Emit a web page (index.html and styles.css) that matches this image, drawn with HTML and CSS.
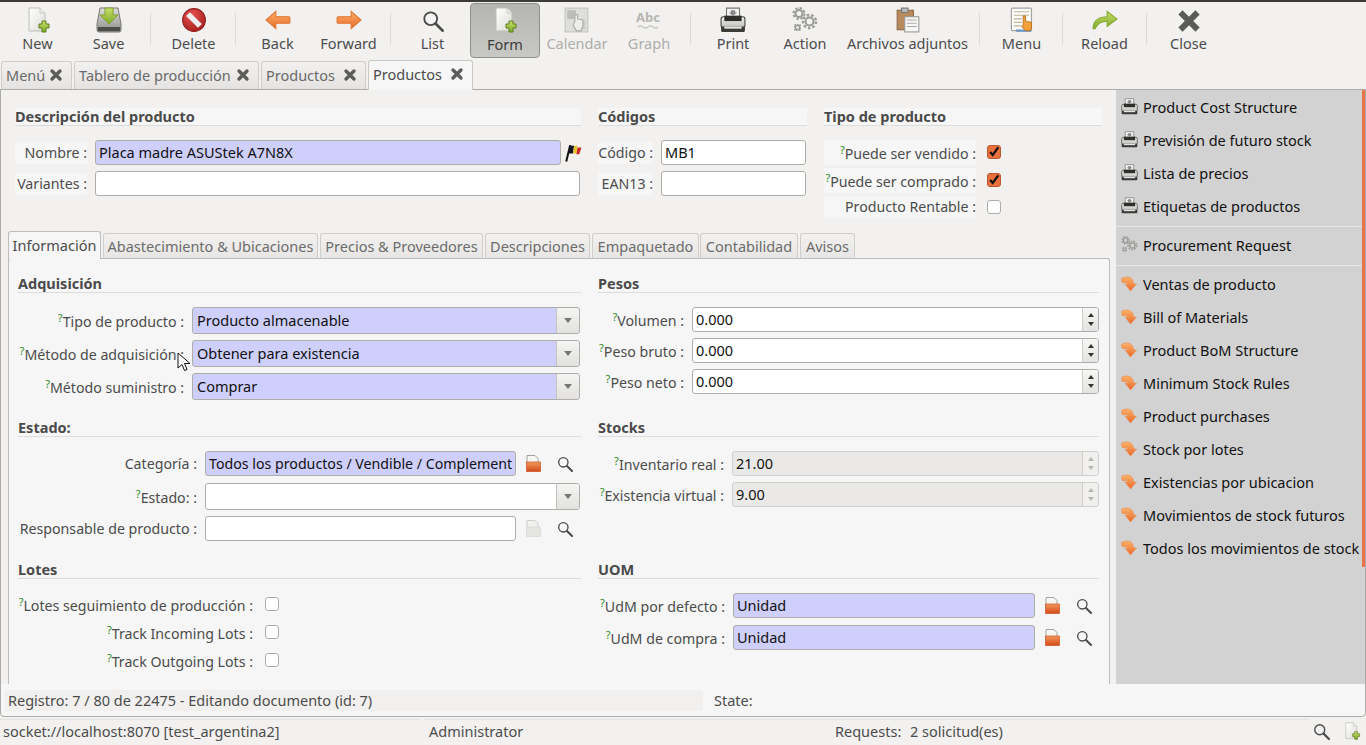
FILE: index.html
```html
<!DOCTYPE html>
<html lang="es">
<head>
<meta charset="utf-8">
<title>Productos</title>
<link rel="stylesheet" href="styles.css">
</head>
<body>
<svg class="defs" xmlns="http://www.w3.org/2000/svg">
<defs>
<linearGradient id="gPage" x1="0" y1="0" x2="1" y2="1"><stop offset="0" stop-color="#fff"/><stop offset="1" stop-color="#dcdcd8"/></linearGradient>
<linearGradient id="gOrange" x1="0" y1="0" x2="0" y2="1"><stop offset="0" stop-color="#fbb26a"/><stop offset="1" stop-color="#e8692a"/></linearGradient>
<linearGradient id="gGreen" x1="0" y1="0" x2="0" y2="1"><stop offset="0" stop-color="#c6e06a"/><stop offset="1" stop-color="#7fa82a"/></linearGradient>
<linearGradient id="gDisk" x1="0" y1="0" x2="0" y2="1"><stop offset="0" stop-color="#dcdcd8"/><stop offset="1" stop-color="#8f8f8b"/></linearGradient>
<linearGradient id="gBody" x1="0" y1="0" x2="0" y2="1"><stop offset="0" stop-color="#f4f4f2"/><stop offset="1" stop-color="#bdbdb9"/></linearGradient>
<radialGradient id="gRed" cx=".4" cy=".3" r=".8"><stop offset="0" stop-color="#e8524f"/><stop offset="1" stop-color="#a01c1c"/></radialGradient>
<linearGradient id="gFolder" x1="0" y1="0" x2="0" y2="1"><stop offset="0" stop-color="#f39a5c"/><stop offset="1" stop-color="#d4491a"/></linearGradient>
<symbol id="i-new" viewBox="0 0 24 26"><path d="M3 1h11l5 5v18H3z" fill="url(#gPage)" stroke="#bdbdb9"/><path d="M14 1v5h5" fill="#eee" stroke="#c8c8c4"/><path d="M16 14h4v3h3v4h-3v4h-4v-4h-3v-4h3z" fill="url(#gGreen)" stroke="#5f7d1e"/></symbol>
<symbol id="i-save" viewBox="0 0 26 26"><path d="M4 1h18l3 16v6a2 2 0 0 1-2 2H3a2 2 0 0 1-2-2v-6z" fill="url(#gDisk)" stroke="#777"/><rect x="2" y="20" width="22" height="4" fill="#4c4c4a"/><path d="M9 1h8v7h5l-9 9-9-9h5z" fill="url(#gGreen)" stroke="#83a32e"/></symbol>
<symbol id="i-del" viewBox="0 0 24 24"><circle cx="12" cy="12" r="10.5" fill="url(#gRed)" stroke="#8e1b1b"/><path d="M6.5 6.5l11 11" stroke="#f0eeee" stroke-width="5"/></symbol>
<symbol id="i-back" viewBox="0 0 24 18"><path d="M1 9l9-8v5h12a1 1 0 0 1 1 1v4a1 1 0 0 1-1 1H10v5z" fill="url(#gOrange)" stroke="#e0742f"/></symbol>
<symbol id="i-fwd" viewBox="0 0 24 18"><path d="M23 9l-9-8v5H2a1 1 0 0 0-1 1v4a1 1 0 0 0 1 1h12v5z" fill="url(#gOrange)" stroke="#e0742f"/></symbol>
<symbol id="i-search" viewBox="0 0 24 24"><circle cx="9.5" cy="9.5" r="7" fill="#f8f8f8" fill-opacity=".6" stroke="#4a4a48" stroke-width="2"/><path d="M15 15l7.5 7.5" stroke="#4a4a48" stroke-width="3" stroke-linecap="round"/></symbol>
<symbol id="i-cal" viewBox="0 0 24 24"><rect x="1" y="1" width="21" height="22" fill="#dededb" stroke="#c4c4c0"/><rect x="3" y="3" width="8" height="8" fill="#bcbcb8"/><rect x="12" y="12" width="8" height="9" fill="#cfcfcc"/><path d="M10 13V7h2.5v4l5 1v6l-2 4h-4l-3-5z" fill="#ececea" stroke="#aaa"/></symbol>
<symbol id="i-print" viewBox="0 0 24 24"><path d="M6 1h12v9H6z" fill="#f4f4f2" stroke="#777"/><path d="M10 3h4v2h2l-4 3-4-3h2z" fill="#888"/><rect x="1" y="9" width="22" height="10" rx="2" fill="url(#gBody)" stroke="#444"/><rect x="4" y="8" width="16" height="5" fill="#2e2e2c"/><rect x="1" y="18" width="22" height="5" rx="1" fill="#3a3a38"/><rect x="4" y="18" width="16" height="2" fill="#e4e4e2"/></symbol>
<symbol id="i-gear" viewBox="0 0 26 26"><g fill="none" stroke="#9a9a96"><circle cx="7" cy="6.5" r="3.5" stroke-width="2"/><circle cx="7" cy="6.5" r="5.5" stroke-width="2" stroke-dasharray="2.5 1.8"/><circle cx="17.5" cy="14.5" r="4" stroke-width="2"/><circle cx="17.5" cy="14.5" r="6.5" stroke-width="2.5" stroke-dasharray="2.5 2"/><rect x="3.5" y="18.5" width="4" height="4" stroke-width="1.5"/><rect x="2.5" y="17.5" width="6" height="6" stroke-width="1" stroke-dasharray="1.5 1.5"/></g></symbol>
<symbol id="i-clip" viewBox="0 0 22 24"><rect x="1" y="3" width="15" height="18" fill="#b98a5e" stroke="#8e6a47"/><rect x="5" y="1" width="6" height="4" fill="#bbb" stroke="#777"/><rect x="8" y="9" width="13" height="14" fill="#f6f6f4" stroke="#999"/><path d="M10 12h9M10 15h9M10 18h9" stroke="#aaa"/></symbol>
<symbol id="i-menu" viewBox="0 0 20 22"><rect x="1" y="1" width="17" height="19" rx="1" fill="#fbfbf9" stroke="#a2a29e"/><path d="M3 4h13M3 7h13M3 10h7M3 13h7M3 16h7" stroke="#c0b89a"/><rect x="5" y="19" width="13" height="2" fill="#6d97c6"/><path d="M11 15V7.5h2V12l5 1v5l-1 2h-4l-3-3z" fill="#f2a13a" stroke="#b96a10" stroke-width=".7"/></symbol>
<symbol id="i-reload" viewBox="0 0 24 18"><path d="M1 17C1 9 7 6 14 6V1l9 7-9 7v-5c-6 0-9 2-11 7z" fill="url(#gGreen)" stroke="#85a82f"/></symbol>
<symbol id="i-x" viewBox="0 0 24 24"><path d="M5 5l14 14M19 5L5 19" stroke="#5a5a58" stroke-width="6.5" stroke-linecap="square"/></symbol>
<symbol id="i-tabx" viewBox="0 0 14 14"><path d="M3 3l8 8M11 3l-8 8" stroke="#5c5c5a" stroke-width="3.4" stroke-linecap="round"/></symbol>
<symbol id="i-flow" viewBox="0 0 17 17"><path d="M1 3C7 .5 12.5 2.500 12.500 9H15.500L9.500 16 4 9H7C7 7.500 4.500 7 2 8 .5 7 .3 4.500 1 3z" fill="url(#gOrange)" stroke="#ee8a4c" stroke-width=".6" stroke-linejoin="round"/></symbol>
<symbol id="i-folder" viewBox="0 0 17 17"><path d="M2 .5h8l3 3v6H2z" fill="#f6f6f4" stroke="#a2a29e"/><rect x="1.5" y="7" width="14" height="9.5" fill="url(#gFolder)" stroke="#c9521f" stroke-width=".7"/></symbol>
<symbol id="i-folder-off" viewBox="0 0 17 17"><path d="M2 .5h8l3 3v6H2z" fill="#f0f0ee" stroke="#cdcdc9"/><rect x="1.5" y="7" width="14" height="9.5" fill="#e4e4e1" stroke="#d6d6d2" stroke-width=".7"/></symbol>
<symbol id="i-flag" viewBox="0 0 16 16"><path d="M2 15.500L5.500 1" stroke="#111" stroke-width="1.8"/><path d="M5 1.500h4l-1 7H3.500z" fill="#15151f"/><path d="M9 1.500h3l-1 7H8z" fill="#e6c52a"/><path d="M12 3h3.500l-2 6H11z" fill="#c8281e"/></symbol>
<symbol id="i-check" viewBox="0 0 14 14"><path d="M2.500 7l3 3.500L12 1.500" fill="none" stroke="#111" stroke-width="2.600"/></symbol>
</defs>
</svg>

<div class="app">
  <div class="topline"></div>

  <nav class="toolbar">
    <button class="tool"><svg class="ti"><use href="#i-new"/></svg><span>New</span></button>
    <button class="tool"><svg class="ti"><use href="#i-save"/></svg><span>Save</span></button>
    <i class="sep wide-sep"></i>
    <button class="tool"><svg class="ti"><use href="#i-del"/></svg><span>Delete</span></button>
    <i class="sep"></i>
    <button class="tool"><svg class="ti"><use href="#i-back"/></svg><span>Back</span></button>
    <button class="tool"><svg class="ti"><use href="#i-fwd"/></svg><span>Forward</span></button>
    <i class="sep"></i>
    <button class="tool"><svg class="ti sm"><use href="#i-search"/></svg><span>List</span></button>
    <button class="tool active"><svg class="ti"><use href="#i-new"/></svg><span>Form</span></button>
    <button class="tool off"><svg class="ti"><use href="#i-cal"/></svg><span>Calendar</span></button>
    <button class="tool off"><svg class="ti"><text x="12" y="15" class="abc">Abc</text><path d="M2 20q2.500-2 5 0t5 0 5 0 5 0" class="abcw"/></svg><span>Graph</span></button>
    <i class="sep tight"></i>
    <button class="tool w72"><svg class="ti"><use href="#i-print"/></svg><span>Print</span></button>
    <button class="tool w72"><svg class="ti"><use href="#i-gear"/></svg><span>Action</span></button>
    <button class="tool wide"><svg class="ti"><use href="#i-clip"/></svg><span>Archivos adjuntos</span></button>
    <i class="sep tight"></i>
    <button class="tool"><svg class="ti"><use href="#i-menu"/></svg><span>Menu</span></button>
    <i class="sep tight"></i>
    <button class="tool"><svg class="ti"><use href="#i-reload"/></svg><span>Reload</span></button>
    <i class="sep"></i>
    <button class="tool"><svg class="ti sm"><use href="#i-x"/></svg><span>Close</span></button>
  </nav>

  <div class="doctabs">
    <div class="dtab t-menu">Menú <svg class="tabx"><use href="#i-tabx"/></svg></div>
    <div class="dtab t-tab">Tablero de producción <svg class="tabx"><use href="#i-tabx"/></svg></div>
    <div class="dtab t-prod">Productos <svg class="tabx"><use href="#i-tabx"/></svg></div>
    <div class="dtab t-prod current">Productos <svg class="tabx"><use href="#i-tabx"/></svg></div>
  </div>

  <div class="panel">
    <div class="body">
      <main class="main">
        <div class="head-grid">
          <section class="desc">
            <h3 class="sec">Descripción del producto</h3>
            <div class="row r-desc">
              <label class="lab tint">Nombre :</label>
              <div class="withflag"><div class="field req">Placa madre ASUStek A7N8X</div><svg class="flag"><use href="#i-flag"/></svg></div>
            </div>
            <div class="row r-desc r-gap">
              <label class="lab tint">Variantes :</label>
              <div class="field"></div>
            </div>
          </section>
          <section class="codes">
            <h3 class="sec">Códigos</h3>
            <div class="row r-code">
              <label class="lab tint">Código :</label>
              <div class="field">MB1</div>
            </div>
            <div class="row r-code r-gap">
              <label class="lab tint">EAN13 :</label>
              <div class="field"></div>
            </div>
          </section>
          <section class="kinds">
            <h3 class="sec">Tipo de producto</h3>
            <div class="checks">
              <div class="row r-kind"><label class="lab tint"><sup class="q">?</sup>Puede ser vendido :</label><span class="box on"><svg><use href="#i-check"/></svg></span></div>
              <div class="row r-kind"><label class="lab tint"><sup class="q">?</sup>Puede ser comprado :</label><span class="box on"><svg><use href="#i-check"/></svg></span></div>
              <div class="row r-kind"><label class="lab tint">Producto Rentable :</label><span class="box"></span></div>
            </div>
          </section>
        </div>

        <div class="nbtabs">
          <div class="nbtab current">Información</div>
          <div class="nbtab n1">Abastecimiento &amp; Ubicaciones</div>
          <div class="nbtab n2">Precios &amp; Proveedores</div>
          <div class="nbtab n3">Descripciones</div>
          <div class="nbtab n4">Empaquetado</div>
          <div class="nbtab n5">Contabilidad</div>
          <div class="nbtab n6">Avisos</div>
        </div>

        <div class="page">
          <section>
            <h3 class="sec">Adquisición</h3>
            <div class="row r-adq"><label class="lab"><sup class="q">?</sup>Tipo de producto :</label><div class="select req"><span class="val">Producto almacenable</span><span class="drop"></span></div></div>
            <div class="row r-adq r-pitch"><label class="lab"><sup class="q">?</sup>Método de adquisición :</label><div class="select req"><span class="val">Obtener para existencia</span><span class="drop"></span></div></div>
            <div class="row r-adq r-pitch"><label class="lab"><sup class="q">?</sup>Método suministro :</label><div class="select req"><span class="val">Comprar</span><span class="drop"></span></div></div>
          </section>
          <section>
            <h3 class="sec">Pesos</h3>
            <div class="row r-pes"><label class="lab"><sup class="q">?</sup>Volumen :</label><div class="spin"><span class="val">0.000</span><span class="arrows"><b class="up"></b><b class="down"></b></span></div></div>
            <div class="row r-pes r-p31"><label class="lab"><sup class="q">?</sup>Peso bruto :</label><div class="spin"><span class="val">0.000</span><span class="arrows"><b class="up"></b><b class="down"></b></span></div></div>
            <div class="row r-pes r-p31"><label class="lab"><sup class="q">?</sup>Peso neto :</label><div class="spin"><span class="val">0.000</span><span class="arrows"><b class="up"></b><b class="down"></b></span></div></div>
          </section>

          <section>
            <h3 class="sec">Estado:</h3>
            <div class="row r-est"><label class="lab">Categoría :</label><div class="rel"><div class="field req fit">Todos los productos / Vendible / Complement</div><svg class="fo"><use href="#i-folder"/></svg><svg class="se"><use href="#i-search"/></svg></div></div>
            <div class="row r-est r-p32"><label class="lab"><sup class="q">?</sup>Estado: :</label><div class="select"><span class="val"></span><span class="drop"></span></div></div>
            <div class="row r-est r-p33"><label class="lab">Responsable de producto :</label><div class="rel"><div class="field"></div><svg class="fo"><use href="#i-folder-off"/></svg><svg class="se"><use href="#i-search"/></svg></div></div>
          </section>
          <section>
            <h3 class="sec">Stocks</h3>
            <div class="row r-sto"><label class="lab"><sup class="q">?</sup>Inventario real :</label><div class="spin ro"><span class="val">21.00</span><span class="arrows"><b class="up"></b><b class="down"></b></span></div></div>
            <div class="row r-sto r-p31"><label class="lab"><sup class="q">?</sup>Existencia virtual :</label><div class="spin ro"><span class="val">9.00</span><span class="arrows"><b class="up"></b><b class="down"></b></span></div></div>
          </section>

          <section>
            <h3 class="sec">Lotes</h3>
            <div class="lots">
              <div class="row r-lot"><label class="lab"><sup class="q">?</sup>Lotes seguimiento de producción :</label><span class="box"></span></div>
              <div class="row r-lot"><label class="lab"><sup class="q">?</sup>Track Incoming Lots :</label><span class="box"></span></div>
              <div class="row r-lot"><label class="lab"><sup class="q">?</sup>Track Outgoing Lots :</label><span class="box"></span></div>
            </div>
          </section>
          <section>
            <h3 class="sec">UOM</h3>
            <div class="row r-uom"><label class="lab"><sup class="q">?</sup>UdM por defecto :</label><div class="rel"><div class="field req">Unidad</div><svg class="fo"><use href="#i-folder"/></svg><svg class="se"><use href="#i-search"/></svg></div></div>
            <div class="row r-uom r-p32b"><label class="lab"><sup class="q">?</sup>UdM de compra :</label><div class="rel"><div class="field req">Unidad</div><svg class="fo"><use href="#i-folder"/></svg><svg class="se"><use href="#i-search"/></svg></div></div>
          </section>
        </div>
      </main>

      <aside class="side">
        <div class="thumb"></div>
        <div class="groups">
          <div class="group">
            <div class="act"><svg><use href="#i-print"/></svg>Product Cost Structure</div>
            <div class="act"><svg><use href="#i-print"/></svg>Previsión de futuro stock</div>
            <div class="act"><svg><use href="#i-print"/></svg>Lista de precios</div>
            <div class="act"><svg><use href="#i-print"/></svg>Etiquetas de productos</div>
          </div>
          <div class="group">
            <div class="act"><svg><use href="#i-gear"/></svg>Procurement Request</div>
          </div>
          <div class="group last">
            <div class="act"><svg><use href="#i-flow"/></svg>Ventas de producto</div>
            <div class="act"><svg><use href="#i-flow"/></svg>Bill of Materials</div>
            <div class="act"><svg><use href="#i-flow"/></svg>Product BoM Structure</div>
            <div class="act"><svg><use href="#i-flow"/></svg>Minimum Stock Rules</div>
            <div class="act"><svg><use href="#i-flow"/></svg>Product purchases</div>
            <div class="act"><svg><use href="#i-flow"/></svg>Stock por lotes</div>
            <div class="act"><svg><use href="#i-flow"/></svg>Existencias por ubicacion</div>
            <div class="act"><svg><use href="#i-flow"/></svg>Movimientos de stock futuros</div>
            <div class="act"><svg><use href="#i-flow"/></svg>Todos los movimientos de stock</div>
          </div>
        </div>
      </aside>
    </div>
    <div class="record">
      <div class="rec-left">Registro: 7 / 80 de 22475 - Editando documento (id: 7)</div>
      <div class="rec-state">State:</div>
    </div>
  </div>

  <footer class="foot">
    <div class="f-cell f-conn">socket://localhost:8070 [test_argentina2]</div>
    <div class="f-cell f-user">Administrator</div>
    <div class="f-cell f-req"><span class="f-key">Requests:</span><span>2 solicitud(es)</span></div>
    <div class="f-icons"><svg class="fs"><use href="#i-search"/></svg><svg class="fn"><use href="#i-new"/></svg></div>
  </footer>

  <svg class="cursor" viewBox="0 0 14 20"><path d="M1 1v15l4-3.500 2.500 6 2.500-1-2.500-6H13z" fill="#fff" stroke="#111"/></svg>
</div>
</body>
</html>
```

FILE: styles.css
```css
* { box-sizing: border-box; }
html, body { margin: 0; padding: 0; }
body { width: 1366px; height: 745px; overflow: hidden; background: #f2f1f0; font-family: "Noto Sans", "Open Sans", sans-serif; font-size: 14.5px; color: #4c4c4c; }
.defs { display: block; width: 0; height: 0; }
.app { position: relative; width: 1366px; height: 745px; display: flex; flex-direction: column; overflow: hidden; }
.topline { height: 2px; background: #3c3b37; flex: none; }

/* toolbar */
.toolbar { height: 57px; flex: none; display: flex; align-items: flex-start; padding: 1px 0 0 2px; }
.tool { width: 71px; height: 55px; flex: none; border: 1px solid transparent; border-radius: 4px; background: none; padding: 3px 0 0; margin: 0; font: inherit; color: #4c4c4c; display: flex; flex-direction: column; align-items: center; gap: 1px; white-space: nowrap; }
.tool span { line-height: 18px; display: block; }
.ti { width: 26px; height: 26px; display: block; flex: none; }
.ti.sm { width: 22px; height: 22px; margin: 3px 0 1px; }
.tool.active { width: 70px; margin: 0 1px 0 2px; background: linear-gradient(#b4b4b1, #c8c8c5); border-color: #8f8f8c; color: #3c3c3c; }
.tool.active span { margin-top: 1px; }
.tool.off { width: 72px; color: #aeaeaa; }
.tool.w72 { width: 72px; }
.tool.wide { width: 133px; }
.sep { width: 1px; height: 32px; margin: 10px 6px 0; background: #dcdbd8; flex: none; }
.sep.wide-sep { margin-right: 7px; }
.sep.tight { margin-left: 5px; }
.abc { font: bold 13px "Noto Sans", sans-serif; fill: #b6b6b2; text-anchor: middle; }
.abcw { fill: none; stroke: #c8c8c4; stroke-width: 1.5; }

/* doc tabs */
.doctabs { height: 30px; flex: none; display: flex; align-items: flex-end; padding-left: 1px; gap: 2px; }
.dtab { height: 28px; border: 1px solid #cfcecb; border-bottom: 0; border-radius: 3px 3px 0 0; background: linear-gradient(#f2f1f0, #e4e3e1); display: flex; align-items: center; justify-content: space-between; padding: 0 4px 2px 4px; color: #6a6a6a; white-space: nowrap; }
.t-menu { width: 71px; }
.t-tab { width: 185px; }
.t-prod { width: 105px; }
.dtab.current { height: 30px; background: #f6f6f6; color: #4c4c4c; margin-bottom: -1px; position: relative; z-index: 1; border-color: #c8c7c4; padding-bottom: 3px; }
.tabx { width: 14px; height: 14px; flex: none; margin-right: 4px; }

/* panel */
.panel { height: 628px; flex: none; border: 1px solid #ababa8; border-radius: 0 0 4px 4px; background: #f6f6f6; display: flex; flex-direction: column; }
.body { height: 594px; flex: none; display: flex; }
.main { width: 1115px; flex: none; background: #f2f1f0; }

.head-grid { display: flex; padding: 18px 0 0 14px; height: 141px; }
.desc { width: 566px; }
.codes { width: 209px; margin-left: 17px; }
.kinds { width: 278px; margin-left: 17px; }
.sec { margin: 0; height: 18px; line-height: 17px; font-size: 14.5px; font-weight: 700; color: #4a4a4a; border-bottom: 1px solid #dcdcda; background: #f6f6f6; }
.page .sec { background: none; }
.row { display: grid; align-items: center; }
.lab { text-align: right; white-space: nowrap; line-height: 22px; display: block; font-size: 14.2px; }
.lab:has(.q) { padding-top: 3px; }
.tint { background: #f6f6f6; }
.q { color: #2e8b1e; font-size: 11px; line-height: 0; vertical-align: 5px; }
.field, .select, .spin { height: 25px; border: 1px solid #aeada9; border-radius: 3px; background: #fff; color: #111; line-height: 23px; padding-left: 3px; overflow: hidden; white-space: nowrap; }
.req { background: #cfcffb; }
.fit { font-size: 14.2px; }

.r-desc { grid-template-columns: 72px 485px; column-gap: 8px; margin-top: 14px; }
.r-desc.r-gap, .r-code.r-gap { margin-top: 6px; }
.withflag { display: flex; align-items: center; }
.withflag .field { width: 466px; flex: none; }
.flag { width: 18px; height: 18px; margin-left: 3px; flex: none; }
.r-code { grid-template-columns: 55px 145px; column-gap: 8px; margin-top: 14px; }
.checks { margin-top: 12px; display: flex; flex-direction: column; }
.r-kind { grid-template-columns: 152px 14px; column-gap: 11px; height: 28px; }
.r-kind:last-child { height: 26px; }
.box { display: block; width: 14px; height: 14px; border: 1px solid #aeada9; border-radius: 3px; background: #fff; }
.box svg { width: 12px; height: 12px; display: block; }
.box.on { background: #e96f3d; border-color: #b9582f; }

/* notebook */
.nbtabs { height: 27px; margin-left: 7px; display: flex; align-items: flex-end; gap: 2px; }
.nbtab { height: 25px; border: 1px solid #cfcecb; border-bottom: 0; border-radius: 3px 3px 0 0; background: linear-gradient(#f2f1f0, #e7e6e4); color: #6c6c6c; text-align: center; line-height: 25px; white-space: nowrap; }
.nbtab.current { width: 93px; height: 28px; margin-bottom: -1px; background: #f6f6f6; color: #4c4c4c; border-color: #bdbcb9; position: relative; z-index: 1; line-height: 27px; }
.n1 { width: 215px; }
.n2 { width: 163px; }
.n3 { width: 105px; }
.n4 { width: 107px; }
.n5 { width: 98px; margin-left: -1px; }
.n6 { width: 55px; }

.page { height: 426px; margin-left: 7px; width: 1102px; border: 1px solid #bdbcb9; border-bottom: 0; border-radius: 3px 3px 0 0; background: #f6f6f6; display: grid; grid-template-columns: 563px 501px; column-gap: 17px; grid-template-rows: 144px 142px 1fr; padding: 16px 0 0 9px; overflow: hidden; }

.r-adq { grid-template-columns: 166px 388px; column-gap: 8px; margin-top: 14px; }
.r-adq.r-pitch { margin-top: 6px; }
.select { height: 27px; padding: 0; display: flex; line-height: 25px; }
.select .val { flex: 1; padding-left: 4px; overflow: hidden; }
.drop { width: 23px; flex: none; border-left: 1px solid #c4c3c0; background: linear-gradient(#f4f4f2, #e2e1de); display: flex; align-items: center; justify-content: center; }
.drop::after { content: ""; border: 4px solid transparent; border-top: 5px solid #777; border-bottom: 0; }
.spin { display: flex; padding: 0; }
.spin .val { flex: 1; padding-left: 3px; }
.arrows { width: 16px; flex: none; border-left: 1px solid #cfcecb; background: linear-gradient(#f6f6f4, #e4e3e1); display: flex; flex-direction: column; align-items: center; justify-content: center; gap: 5px; }
.up { border: 3px solid transparent; border-bottom: 4px solid #333; border-top: 0; }
.down { border: 3px solid transparent; border-top: 4px solid #333; border-bottom: 0; }
.spin.ro { background: #eae9e7; border-color: #d0cfcc; }
.spin.ro .arrows { background: #f1f0ee; }
.spin.ro .up { border-bottom-color: #b6b6b3; }
.spin.ro .down { border-top-color: #b6b6b3; }
.r-pes { grid-template-columns: 86px 407px; column-gap: 8px; margin-top: 14px; }
.r-sto { grid-template-columns: 126px 367px; column-gap: 8px; margin-top: 14px; }
.r-uom { grid-template-columns: 127px 366px; column-gap: 8px; margin-top: 14px; }
.r-pes.r-p31, .r-sto.r-p31 { margin-top: 6px; }
.r-uom.r-p32b { margin-top: 7px; }
.r-est { grid-template-columns: 179px 375px; column-gap: 8px; margin-top: 14px; }
.r-est.r-p32 { margin-top: 7px; }
.r-est.r-p33 { margin-top: 6px; }
.rel { display: flex; align-items: center; }
.rel .field { flex: 1; min-width: 0; }
.fo { width: 17px; height: 17px; margin-left: 9px; flex: none; }
.se { width: 16px; height: 16px; margin: 0 7px 0 15px; flex: none; }
.lots { margin-top: 11px; display: flex; flex-direction: column; }
.r-lot { grid-template-columns: 235px 14px; column-gap: 12px; height: 28px; }
.r-lot .lab:has(.q) { padding-top: 4px; }

/* side */
.side { width: 249px; flex: none; background: #d2d2d2; display: flex; flex-direction: row-reverse; }
.thumb { width: 3px; height: 477px; background: #e9744a; flex: none; }
.groups { flex: 1; }
.group { padding: 1px 0 4px; border-bottom: 1px solid #e6e6e6; }
.group:first-child { padding-top: 0; }
.group.last { border-bottom: 0; }
.act { height: 33px; display: flex; align-items: center; padding-left: 5px; color: #111; white-space: nowrap; }
.act svg { width: 17px; height: 17px; margin-right: 5px; flex: none; }

/* record bar */
.record { flex: 1; display: flex; align-items: center; padding-left: 4px; }
.rec-left { width: 698px; height: 21px; background: #f1f0ee; padding-left: 3px; line-height: 21px; white-space: nowrap; }
.rec-state { margin-left: 11px; line-height: 21px; }

/* footer */
.foot { flex: 1; display: flex; align-items: flex-start; padding-top: 2px; }
.f-cell { height: 24px; line-height: 22px; border-top: 1px solid #e4e3e0; white-space: nowrap; }
.f-conn { width: 420px; padding-left: 3px; margin-right: 4px; }
.f-user { width: 406px; padding-left: 5px; }
.f-req { width: 480px; display: flex; padding-left: 5px; }
.f-key { width: 75px; flex: none; }
.f-icons { flex: 1; display: flex; align-items: center; justify-content: flex-end; gap: 13px; padding: 3px 5px 0 0; }
.fs { width: 17px; height: 17px; flex: none; }
.fn { width: 18px; height: 18px; flex: none; }

.cursor { position: absolute; left: 177px; top: 352px; width: 14px; height: 20px; }
```
